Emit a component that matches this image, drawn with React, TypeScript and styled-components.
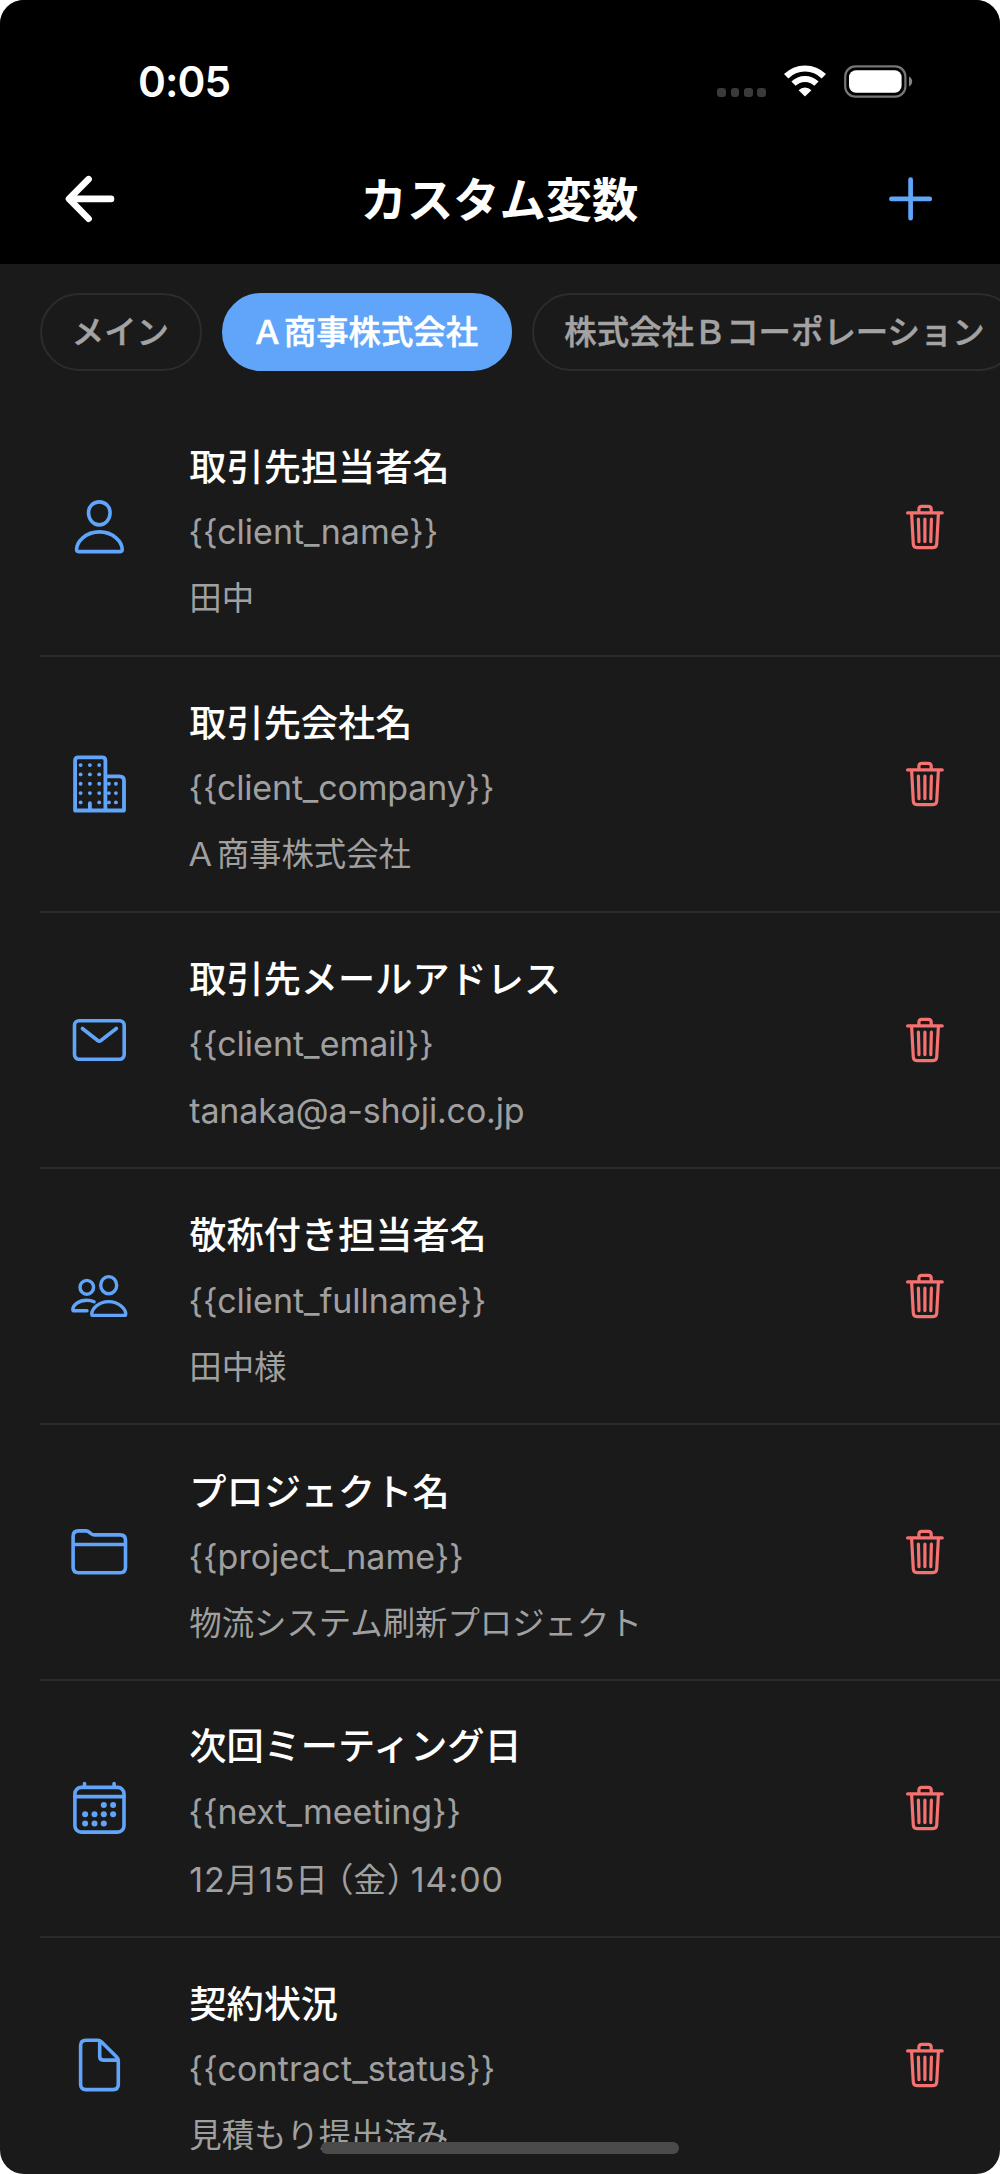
import React from "react";
import styled, { createGlobalStyle } from "styled-components";

const BLUE = "#60a5fa";
const RED = "#f87171";

const GlobalStyle = createGlobalStyle`
  html, body { margin: 0; padding: 0; background: #ffffff; }
  * { box-sizing: border-box; }
`;

const Screen = styled.main`
  position: relative;
  width: 1000px;
  height: 2174px;
  overflow: hidden;
  border-radius: 24px;
  background: #1a1a1a;
  color: #ffffff;
  font-family: Inter, "Noto Sans CJK JP", sans-serif;
  display: flex;
  flex-direction: column;
`;

const Header = styled.header`
  flex: none;
  height: 263.5px;
  background: #000000;
`;

const StatusBar = styled.div`
  height: 134.5px;
  padding: 28px 87px 0 138px;
  display: flex;
  align-items: center;
  justify-content: space-between;
`;

const Clock = styled.span`
  padding-top: 1px;
  font-size: 42.3px;
  font-weight: 600;
  line-height: 50px;
  letter-spacing: -0.9px;
`;

const StatusIcons = styled.div`
  display: flex;
  align-items: center;
`;

const SignalDots = styled.div`
  display: flex;
  gap: 4.5px;
  margin: 22px 18px 0 0;
`;

const SignalDot = styled.i`
  width: 8.8px;
  height: 8.8px;
  border-radius: 3px;
  background: #3a3a3a;
`;

const NavBar = styled.nav`
  height: 129px;
  padding: 0 59.5px;
  display: grid;
  grid-template-columns: 60px 1fr 60px;
  align-items: center;
`;

const IconButton = styled.button`
  width: 60px;
  height: 60px;
  padding: 0;
  border: 0;
  background: none;
  display: block;
`;

const Title = styled.h1`
  margin: 0;
  padding: 2px 1px 0 0;
  text-align: center;
  font-size: 46.3px;
  font-weight: 700;
  line-height: 60px;
`;

const Tabs = styled.div`
  flex: none;
  height: 136.9px;
  padding: 29.8px 0 0 40px;
  display: flex;
  align-items: flex-start;
  gap: 20px;
`;

const Chip = styled.button<{ $active?: boolean }>`
  flex: none;
  height: 77.3px;
  padding: ${(p) => (p.$active ? "0 32.4px 3px 27px" : "0 31.4px 3px 29.8px")};
  border: 2px solid ${(p) => (p.$active ? BLUE : "#2c2c2c")};
  border-radius: 39px;
  background: ${(p) => (p.$active ? BLUE : "transparent")};
  color: ${(p) => (p.$active ? "#ffffff" : "#a3a3a3")};
  font-family: "Noto Sans CJK JP", sans-serif;
  font-size: 32.4px;
  font-weight: 500;
  -webkit-text-stroke: 0.5px currentColor;
  line-height: 44px;
  white-space: nowrap;
`;

const List = styled.ul`
  list-style: none;
  margin: 0;
  padding: 0 0 0 40px;
`;

const Row = styled.li`
  height: 256.2px;
  padding: 0 44.7px 0 29.4px;
  border-bottom: 2px solid #2b2b2b;
  display: grid;
  grid-template-columns: 60px 1fr 60px;
  align-items: center;
`;

const RowText = styled.div`
  padding: 9.2px 0 0 59.9px;
  white-space: nowrap;
`;

const RowTitle = styled.h2`
  margin: -1.3px 0 1.3px;
  font-family: "Noto Sans CJK JP", sans-serif;
  font-size: 37.2px;
  font-weight: 500;
  line-height: 66px;
`;

const RowKey = styled.p<{ $tracking?: number }>`
  margin: 0 0 0 -0.7px;
  color: #a0a0a0;
  font-size: 34px;
  letter-spacing: ${(p) => p.$tracking ?? 0}px;
  line-height: 66px;
`;

const RowValue = styled.p<{ $latin?: boolean; $outdent?: number; $tracking?: number }>`
  margin: ${(p) => (p.$latin ? "0.5px 0 -0.5px" : "1px 0 -1px")} ${(p) => -(p.$outdent ?? 0)}px;
  color: #a0a0a0;
  font-size: ${(p) => (p.$latin ? 34 : 32.4)}px;
  letter-spacing: ${(p) => p.$tracking ?? 0}px;
  line-height: 66px;
`;

const Bracket = styled.span<{ $before?: number; $after?: number }>`
  margin-left: ${(p) => p.$before ?? 0}px;
  margin-right: ${(p) => p.$after ?? 0}px;
  font-family: "Noto Sans CJK JP", sans-serif;
  font-feature-settings: "halt" 1;
  letter-spacing: 0;
`;

const Kanji = styled.span`
  font-size: 32.4px;
`;

const HomeIndicator = styled.div`
  position: absolute;
  left: 320.5px;
  top: 2141.5px;
  width: 358.5px;
  height: 12.8px;
  border-radius: 7px;
  background: #4b4b4b;
`;

const Glyph = styled.svg<{ $color: string; $weight: number }>`
  display: block;
  width: 60px;
  height: 60px;
  fill: none;
  stroke: ${(p) => p.$color};
  stroke-width: ${(p) => p.$weight};
  stroke-linecap: round;
  stroke-linejoin: round;
  circle.dot { fill: ${(p) => p.$color}; stroke: none; }
`;

const Dots = ({ points, r }: { points: number[][]; r: number }) => (
  <>
    {points.map(([x, y]) => (
      <circle key={`${x}-${y}`} className="dot" cx={x} cy={y} r={r} />
    ))}
  </>
);

const PersonIcon = () => (
  <Glyph $color={BLUE} $weight={3.6} viewBox="0 0 60 60">
    <path d="M30.3 4.9C36.5 4.9 41.1 9.6 41.1 15.8C41.1 22.4 36.3 27.9 30.3 27.9C24.3 27.9 19.5 22.4 19.5 15.8C19.5 9.6 24.1 4.9 30.3 4.9Z" />
    <path d="M9.5 54.6H51.3Q53.2 54.6 53.2 52.6C53.2 45 44.3 34.9 30.4 34.9C16.5 34.9 7.6 45 7.6 52.6Q7.6 54.6 9.5 54.6Z" />
  </Glyph>
);

const BuildingIcon = () => (
  <Glyph $color={BLUE} $weight={3.8} viewBox="0 0 60 60">
    <path d="M6.1 56.5V6.6Q6.1 3.3 9.4 3.3H33.1Q36.4 3.3 36.4 6.6V56.5M36.4 22.3H50.5Q55 22.3 55 26.8V56.5H6.1M20.9 49.2V56" />
    <Dots
      r={1.95}
      points={[
        ...[11.1, 20.4, 29.7, 39.1, 48.4].flatMap((y) => [[11.6, y], [30.2, y]]),
        ...[11.1, 20.4, 29.7, 39.1].map((y) => [20.9, y]),
        ...[29.7, 39.1, 48.4].flatMap((y) => [[39.9, y], [46.9, y]]),
      ]}
    />
  </Glyph>
);

const MailIcon = () => (
  <Glyph $color={BLUE} $weight={3.6} viewBox="0 0 60 60">
    <rect x="5.5" y="10.7" width="49.7" height="38.5" rx="4.6" />
    <path d="M13.4 18.5L28.7 30.5Q30.3 31.7 31.9 30.5L47.4 18.5" />
  </Glyph>
);

const PeopleIcon = () => (
  <Glyph $color={BLUE} $weight={3.4} viewBox="0 0 60 60">
    <ellipse cx="39.7" cy="19.2" rx="8" ry="8.6" />
    <path d="M24.2 49.4H55.3Q56.7 49.4 56.7 47.9C56.7 43.2 50.2 35.6 39.7 35.6C29.2 35.6 22.8 43.2 22.8 47.9Q22.8 49.4 24.2 49.4Z" />
    <ellipse cx="17.8" cy="21.3" rx="6.8" ry="6.9" />
    <path d="M18 44.8H5.2Q3.8 44.8 3.8 43.4C3.8 39.5 9.2 34.3 17.8 34.3C20.8 34.3 23.2 34.9 25.1 35.8" />
  </Glyph>
);

const FolderIcon = () => (
  <Glyph $color={BLUE} $weight={3.6} viewBox="0 0 60 60">
    <path d="M4.1 14.4Q4.1 8.9 9.6 8.9H16.7Q18.8 8.9 20.4 10.3L21.8 11.5Q23.5 12.9 25.7 12.9H51.1Q56.5 12.9 56.5 18.4V45.2Q56.5 50.7 51.1 50.7H9.6Q4.1 50.7 4.1 45.2ZM4.1 22.5H56.5" />
  </Glyph>
);

const CalendarIcon = () => (
  <Glyph $color={BLUE} $weight={3.6} viewBox="0 0 60 60">
    <rect x="5.9" y="9.4" width="49.1" height="44.7" rx="6.4" />
    <path d="M5.9 18.6H55M15.5 5.6V9M45.1 5.6V9" />
    <Dots
      r={3}
      points={[
        [34.8, 26.9], [44.1, 26.9],
        [16.1, 36.3], [25.5, 36.3], [34.8, 36.3], [44.1, 36.3],
        [16.1, 45.6], [25.5, 45.6], [34.8, 45.6],
      ]}
    />
  </Glyph>
);

const DocumentIcon = () => (
  <Glyph $color={BLUE} $weight={3.6} viewBox="0 0 60 60">
    <path d="M11.6 10.5Q11.6 5.2 16.9 5.2H28.8Q30.8 5.2 32.3 6.7L47.7 22Q49.3 23.6 49.3 25.7V49.3Q49.3 54.6 44 54.6H16.9Q11.6 54.6 11.6 49.3ZM30.7 6V21.6Q30.7 25.1 34.2 25.1H48.8" />
  </Glyph>
);

const TrashIcon = () => (
  <Glyph $color={RED} $weight={3.2} viewBox="0 0 60 60">
    <path d="M12.6 15.9H47.2M23.9 15.5V12.3Q23.9 9.4 26.8 9.4H33.3Q36.2 9.4 36.2 12.3V15.5" />
    <path d="M16.6 16.5L18.3 47.2Q18.5 50.6 21.9 50.6H38.1Q41.5 50.6 41.7 47.2L43.4 16.5M23.4 22L24 44.6M29.9 22V44.6M36.4 22L35.8 44.6" />
  </Glyph>
);

const BackIcon = () => (
  <Glyph $color="#ffffff" $weight={6.6} viewBox="0 0 60 60">
    <path d="M28.6 10.2L9 29.9L28.6 49.7M9.6 29.9H51" />
  </Glyph>
);

const PlusIcon = () => (
  <Glyph $color={BLUE} $weight={4.7} viewBox="0 0 60 60">
    <path d="M29.6 10.6V49.2M10.4 29.9H48.8" />
  </Glyph>
);

const WifiIcon = () => (
  <svg width="42" height="32" viewBox="0 0 42 32" fill="none" stroke="#ffffff">
    <path d="M2.2 11.3A26.5 26.5 0 0 1 39.8 11.3" strokeWidth="6.2" />
    <path d="M9.5 18.7A16.2 16.2 0 0 1 32.5 18.7" strokeWidth="6" />
    <path d="M21 31.5L14.6 25.2A9.2 9.2 0 0 1 27.4 25.2Z" fill="#ffffff" stroke="none" />
  </svg>
);

const BatteryIcon = styled(({ className }: { className?: string }) => (
  <svg className={className} width="69" height="33" viewBox="0 0 69 33" fill="none">
    <rect x="1.2" y="1.4" width="60.2" height="30.2" rx="10.2" stroke="#757575" strokeWidth="2.2" />
    <rect x="5" y="5.3" width="52.6" height="22.4" rx="7" fill="#ffffff" />
    <path d="M65 11.4Q68.2 13.3 68.2 16.4T65 21.4Z" fill="#858585" />
  </svg>
))`
  margin-left: 18px;
`;

const tabs = [
  { label: "メイン" },
  { label: "Ａ商事株式会社", active: true },
  { label: "株式会社Ｂコーポレーション" },
];

interface Variable {
  icon: React.ReactNode;
  title: string;
  name: string;
  value: React.ReactNode;
  latin?: boolean;
  outdent?: number;
  tracking?: number;
  valueTracking?: number;
}

const variables: Variable[] = [
  { icon: <PersonIcon />, title: "取引先担当者名", name: "client_name", value: "田中" },
  { icon: <BuildingIcon />, title: "取引先会社名", name: "client_company", value: "Ａ商事株式会社", outdent: 5, tracking: -0.16 },
  {
    icon: <MailIcon />,
    title: "取引先メールアドレス",
    name: "client_email",
    value: "tanaka@a-shoji.co.jp",
    latin: true,
    valueTracking: -0.15,
  },
  { icon: <PeopleIcon />, title: "敬称付き担当者名", name: "client_fullname", value: "田中様" },
  { icon: <FolderIcon />, title: "プロジェクト名", name: "project_name", value: "物流システム刷新プロジェクト" },
  {
    icon: <CalendarIcon />,
    title: "次回ミーティング日",
    name: "next_meeting",
    latin: true,
    tracking: -0.1,
    valueTracking: 0.9,
    value: (
      <>
        12<Kanji>月</Kanji>15<Kanji>日</Kanji>
        <Bracket $before={8}>（</Bracket>
        <Kanji>金</Kanji>
        <Bracket $after={7}>）</Bracket>14:00
      </>
    ),
  },
  { icon: <DocumentIcon />, title: "契約状況", name: "contract_status", value: "見積もり提出済み", tracking: 0.15 },
];

export default function App() {
  return (
    <>
      <GlobalStyle />
      <Screen>
        <Header>
          <StatusBar>
            <Clock>0:05</Clock>
            <StatusIcons>
              <SignalDots>
                {[0, 1, 2, 3].map((i) => (
                  <SignalDot key={i} />
                ))}
              </SignalDots>
              <WifiIcon />
              <BatteryIcon />
            </StatusIcons>
          </StatusBar>
          <NavBar>
            <IconButton aria-label="戻る"><BackIcon /></IconButton>
            <Title>カスタム変数</Title>
            <IconButton aria-label="追加"><PlusIcon /></IconButton>
          </NavBar>
        </Header>
        <Tabs>
          {tabs.map((t) => (
            <Chip key={t.label} $active={t.active}>{t.label}</Chip>
          ))}
        </Tabs>
        <List>
          {variables.map((v) => (
            <Row key={v.name}>
              {v.icon}
              <RowText>
                <RowTitle>{v.title}</RowTitle>
                <RowKey $tracking={v.tracking}>{`{{${v.name}}}`}</RowKey>
                <RowValue $latin={v.latin} $outdent={v.outdent} $tracking={v.valueTracking}>
                  {v.value}
                </RowValue>
              </RowText>
              <IconButton aria-label="削除"><TrashIcon /></IconButton>
            </Row>
          ))}
        </List>
        <HomeIndicator />
      </Screen>
    </>
  );
}
